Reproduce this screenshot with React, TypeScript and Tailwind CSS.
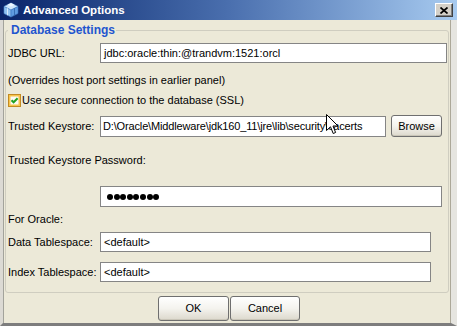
const CubeIcon = () => (
    <svg width="16" height="16" viewBox="0 0 16 16">
        <polygon points="8,1 15,4.5 8,8 1,4.5" fill="#cfe6fb" stroke="#6fa6dc" strokeWidth="0.6" />
        <polygon points="1,4.5 8,8 8,15 1,11.5" fill="#8fc1f0" stroke="#4f8ad0" strokeWidth="0.6" />
        <polygon points="15,4.5 8,8 8,15 15,11.5" fill="#5f9be0" stroke="#3b74c0" strokeWidth="0.6" />
        <polygon points="8,1 11.5,2.75 8,4.5 4.5,2.75" fill="#eef7ff" />
        <line x1="4.5" y1="6.25" x2="4.5" y2="13.25" stroke="#e8f4ff" strokeWidth="0.8" />
        <line x1="11.5" y1="6.25" x2="11.5" y2="13.25" stroke="#2f62a8" strokeWidth="0.8" />
    </svg>
);

const Input = ({ w, h = 'h-[20px]', children }: { w: string; h?: string; children?: React.ReactNode }) => (
    <div className={`${w} ${h} flex items-center border border-[#858585] bg-white pl-[3px] whitespace-nowrap overflow-hidden`}>
        {children}
    </div>
);

const XpButton = ({ w, h, label }: { w: string; h: string; label: string }) => (
    <button
        type="button"
        className={`${w} ${h} rounded-[3px] border border-[#6f6f6f] bg-linear-to-b from-[#ffffff] via-[#f4f3ee] to-[#dcd8cc] text-[11px] text-black shadow-[inset_0_-1px_0_#c9c5b8]`}
    >
        {label}
    </button>
);

export default function App() {
    return (
        <div className="relative flex h-[326px] w-[457px] flex-col overflow-hidden font-['Liberation_Sans',Arial,sans-serif] text-[11px] text-black">
            {/* Title bar */}
            <div className="flex h-[20px] shrink-0 items-center bg-linear-to-r from-[#0a246a] via-[#4a6fae] to-[#a8cbf0] pl-[3px] pr-[4px]">
                <CubeIcon />
                <span className="ml-[4px] text-[11.5px] font-bold leading-[14px] text-white">Advanced Options</span>
                <button
                    type="button"
                    title="close"
                    className="ml-auto flex h-[14px] w-[18px] items-center justify-center border border-t-white border-l-white border-r-[#404040] border-b-[#404040] bg-[#d4d0c8] shadow-[inset_-1px_-1px_0_#808080]"
                >
                    <svg width="8" height="7" viewBox="0 0 8 7">
                        <path d="M0.5 0.5 L7.5 6.5 M7.5 0.5 L0.5 6.5" stroke="#000" strokeWidth="1.7" />
                    </svg>
                </button>
            </div>

            {/* Window frame + body */}
            <div className="flex flex-1 border-b-[3px] border-l-[3px] border-r-[6px] border-b-[#7d7d7d] border-l-[#dcdad4] border-r-[#e6e5e0]">
                <div className="flex flex-1 flex-col border-l border-r border-l-[#a3a39b] border-r-[#aca899] bg-[#ece9d8]">
                    <fieldset className="ml-[1px] mt-[3px] w-[444px] rounded-[3px] border border-[#cfcdc0] pb-[10px] pl-[2px]">
                        <legend className="pl-[3px] pr-[1px] text-[12px] font-bold leading-[14px] text-[#1f55cf]">
                            Database Settings
                        </legend>

                        <div className="mt-[6px] flex h-[20px] items-center">
                            <span className="w-[92px]">JDBC URL:</span>
                            <Input w="w-[347px]">jdbc:oracle:thin:@trandvm:1521:orcl</Input>
                        </div>

                        <div className="mt-[10px] leading-[14px]">(Overrides host port settings in earlier panel)</div>

                        <div className="mt-[7px] flex h-[13px] items-center">
                            <div className="flex h-[13px] w-[13px] items-center justify-center border border-[#c28a22] bg-[#fbfbf6] shadow-[inset_0_0_0_1.5px_#f8c44c]">
                                <svg width="9" height="9" viewBox="0 0 9 9">
                                    <path d="M1.5 4.2 L3.6 6.3 L7.6 2.2" fill="none" stroke="#21a121" strokeWidth="2" />
                                </svg>
                            </div>
                            <span className="ml-[1px]">Use secure connection to the database (SSL)</span>
                        </div>

                        <div className="mt-[8px] flex h-[22px] items-end">
                            <span className="w-[92px] self-center">Trusted Keystore:</span>
                            <Input w="w-[286px]" h="h-[21px]">
                                <span className="-ml-[1px] tracking-[-0.15px]">D:\Oracle\Middleware\jdk160_11\jre\lib\security\cacerts</span>
                            </Input>
                            <div className="ml-[5px]">
                                <XpButton w="w-[51px]" h="h-[22px]" label="Browse" />
                            </div>
                        </div>

                        <div className="mt-[16px] leading-[14px]">Trusted Keystore Password:</div>

                        <div className="mt-[19px] flex pl-[92px]">
                            <Input w="w-[342px]" h="h-[21px]">
                                <div className="ml-[3px] flex gap-[0.6px]">
                                    {[0, 1, 2, 3, 4, 5, 6, 7].map((i) => (
                                        <span key={i} className="h-[6px] w-[6px] rounded-full bg-black" />
                                    ))}
                                </div>
                            </Input>
                        </div>

                        <div className="mt-[5px] leading-[14px]">For Oracle:</div>

                        <div className="mt-[6px] flex h-[20px] items-center">
                            <span className="w-[92px]">Data Tablespace:</span>
                            <Input w="w-[331px]">&lt;default&gt;</Input>
                        </div>

                        <div className="mt-[10px] flex h-[20px] items-center">
                            <span className="w-[92px]">Index Tablespace:</span>
                            <Input w="w-[331px]">&lt;default&gt;</Input>
                        </div>
                    </fieldset>

                    <div className="mt-[3px] flex justify-center gap-[1px] pl-[4px]">
                        <XpButton w="w-[71px]" h="h-[25px]" label="OK" />
                        <XpButton w="w-[70px]" h="h-[25px]" label="Cancel" />
                    </div>
                </div>
            </div>

            {/* Mouse pointer over the keystore field */}
            <svg className="absolute left-[326px] top-[114px]" width="13" height="21" viewBox="0 0 13 21">
                <path
                    d="M0.5 0.5 L0.5 16.5 L4.5 12.8 L7.2 19.5 L9.6 18.5 L7 12 L12 12 Z"
                    fill="#fff"
                    stroke="#000"
                    strokeWidth="1"
                    strokeLinejoin="miter"
                />
            </svg>
        </div>
    );
}
